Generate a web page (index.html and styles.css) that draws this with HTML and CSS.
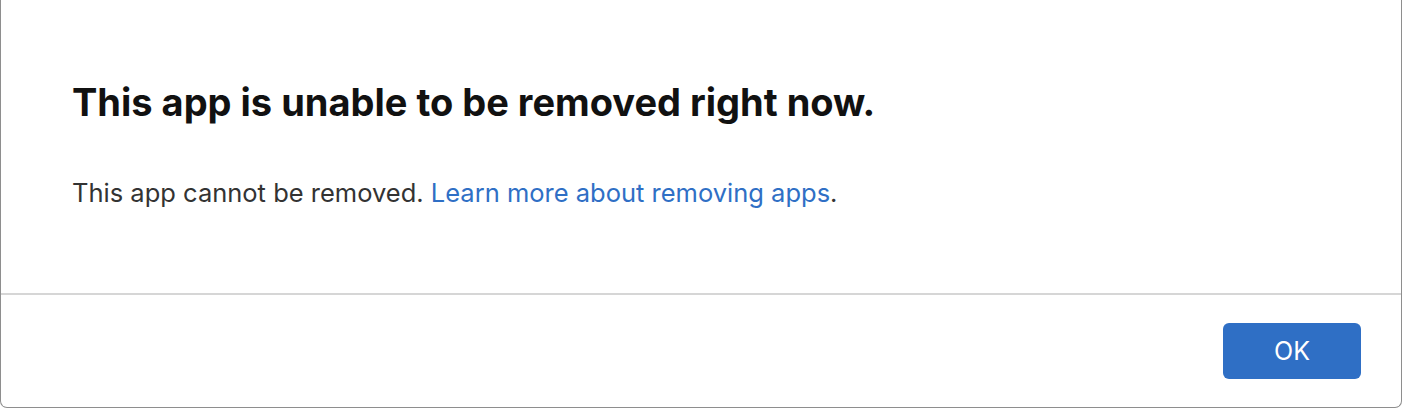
FILE: index.html
```html
<!DOCTYPE html>
<html>
<head>
<meta charset="utf-8">
<link rel="stylesheet" href="styles.css">
</head>
<body>
<div class="dialog">
  <div class="content">
    <h1 class="title">This app is unable to be removed right now.</h1>
    <p class="message">This app cannot be removed. <a class="link" href="#">Learn more about removing apps</a>.</p>
  </div>
  <div class="footer">
    <button class="btn-ok">OK</button>
  </div>
</div>
</body>
</html>
```
FILE: styles.css
```css
html, body {
  margin: 0;
  padding: 0;
  background: #ffffff;
}
.dialog {
  box-sizing: border-box;
  width: 1402px;
  height: 408px;
  border-left: 1px solid #8e8e8e;
  border-right: 1px solid #8e8e8e;
  border-bottom: 1px solid #8e8e8e;
  border-radius: 0 0 7px 7px;
  display: flex;
  flex-direction: column;
  font-family: Inter, "Open Sans", sans-serif;
  background: #fff;
}
.content {
  height: 295px;
  box-sizing: border-box;
  padding: 80px 71px 0;
  border-bottom: 2px solid #d6d6d6;
}
.title {
  margin: 0;
  font-size: 38px;
  line-height: 44px;
  font-weight: 700;
  color: #111111;
}
.message {
  margin: 53px 0 0;
  font-size: 25.5px;
  line-height: 32px;
  color: #333333;
}
.link {
  color: #2f6fc5;
  text-decoration: none;
}
.footer {
  flex: 1;
  display: flex;
  align-items: center;
  justify-content: flex-end;
  padding-right: 40px;
}
.btn-ok {
  width: 138px;
  height: 56px;
  border: none;
  border-radius: 6px;
  background: #2f6fc5;
  color: #ffffff;
  font-family: Inter, "Open Sans", sans-serif;
  font-size: 25px;
  padding: 0;
}
```
